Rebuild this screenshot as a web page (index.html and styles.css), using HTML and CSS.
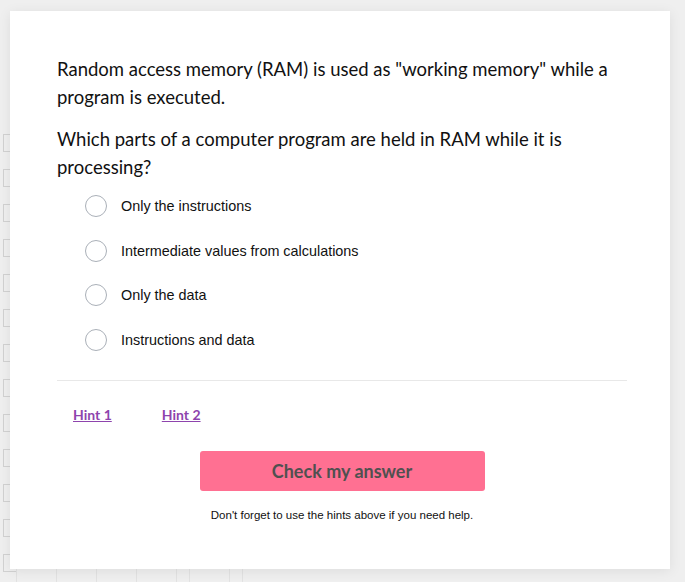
FILE: index.html
```html
<!DOCTYPE html>
<html lang="en">
<head>
<meta charset="utf-8">
<title>Question</title>
<link rel="stylesheet" href="styles.css">
</head>
<body>
<div class="backdrop">
  <div class="bd-col">
    <span class="bd-box"></span><span class="bd-box"></span><span class="bd-box"></span><span class="bd-box"></span>
    <span class="bd-box"></span><span class="bd-box"></span><span class="bd-box"></span><span class="bd-box"></span>
    <span class="bd-box"></span><span class="bd-box"></span><span class="bd-box"></span><span class="bd-box"></span>
    <span class="bd-box"></span>
  </div>
  <div class="bd-row">
    <span class="bd-cell w40"></span><span class="bd-cell w40"></span><span class="bd-cell w40"></span><span class="bd-cell w40"></span>
    <span class="bd-cell w13"></span><span class="bd-cell w40"></span><span class="bd-cell w13"></span><span class="bd-cell w40"></span>
  </div>
</div>
<main class="card">
  <p class="q">Random access memory (RAM) is used as "working memory" while a program is executed.</p>
  <p class="q">Which parts of a computer program are held in RAM while it is processing?</p>
  <ul class="options">
    <li class="option"><span class="radio"></span><span>Only the instructions</span></li>
    <li class="option"><span class="radio"></span><span>Intermediate values from calculations</span></li>
    <li class="option"><span class="radio"></span><span>Only the data</span></li>
    <li class="option"><span class="radio"></span><span>Instructions and data</span></li>
  </ul>
  <hr class="divider">
  <div class="hints">
    <a class="hint" href="#">Hint 1</a>
    <a class="hint" href="#">Hint 2</a>
  </div>
  <div class="actions">
    <button class="check" type="button">Check my answer</button>
    <p class="note">Don't forget to use the hints above if you need help.</p>
  </div>
</main>
</body>
</html>
```

FILE: styles.css
```css
* { box-sizing: border-box; }
html, body { margin: 0; padding: 0; }
body {
  width: 685px;
  height: 582px;
  background: #efefef;
  overflow: hidden;
  position: relative;
  font-family: "Liberation Sans", Arial, sans-serif;
}
.backdrop {
  position: absolute;
  inset: 0;
  z-index: 0;
}
.bd-col {
  position: absolute;
  left: 3px;
  top: 134px;
  display: flex;
  flex-direction: column;
  gap: 17px;
}
.bd-box {
  display: block;
  width: 14px;
  height: 18px;
  border: 1px solid #d2d2d2;
}
.bd-row {
  position: absolute;
  left: 16px;
  top: 568px;
  display: flex;
}
.bd-cell {
  display: block;
  height: 14px;
  border-left: 1px solid #e2e2e2;
}
.bd-cell.w40 { width: 40px; }
.bd-cell.w13 { width: 13px; }

.card {
  position: relative;
  z-index: 1;
  margin: 11px 0 0 10px;
  width: 660px;
  height: 558px;
  background: #fff;
  box-shadow: 0 2px 12px rgba(0,0,0,0.08);
  padding: 45px 43px 0 47px;
}
.q {
  margin: 0 0 15px;
  font-family: Lato, sans-serif;
  font-size: 18.5px;
  line-height: 27.5px;
  color: #111;
}
.options {
  list-style: none;
  margin: -1px 0 0;
  padding: 0 0 0 28px;
  display: flex;
  flex-direction: column;
  gap: 22.7px;
}
.option {
  display: flex;
  align-items: center;
  gap: 14px;
  font-size: 14.4px;
  color: #111;
  height: 22px;
}
.radio {
  width: 22px;
  height: 22px;
  border-radius: 50%;
  border: 1px solid #aab0b8;
  background: #fff;
  flex: none;
}
.divider {
  margin: 29px 0 0;
  border: 0;
  border-top: 1px solid #e8e8e8;
}
.hints {
  display: flex;
  gap: 50px;
  padding: 25px 0 0 16px;
}
.hint {
  font-family: Lato, sans-serif;
  font-size: 14px;
  font-weight: 700;
  color: #8e44ad;
  text-decoration: underline;
}
.actions {
  display: flex;
  flex-direction: column;
  align-items: center;
  padding-top: 28px;
}
.check {
  width: 285px;
  height: 40px;
  border: 0;
  border-radius: 3px;
  background: #ff7092;
  color: #505050;
  font-family: Lato, sans-serif;
  font-weight: 700;
  font-size: 18px;
}
.note {
  margin: 18px 0 0;
  font-size: 11.5px;
  color: #111;
}
```
